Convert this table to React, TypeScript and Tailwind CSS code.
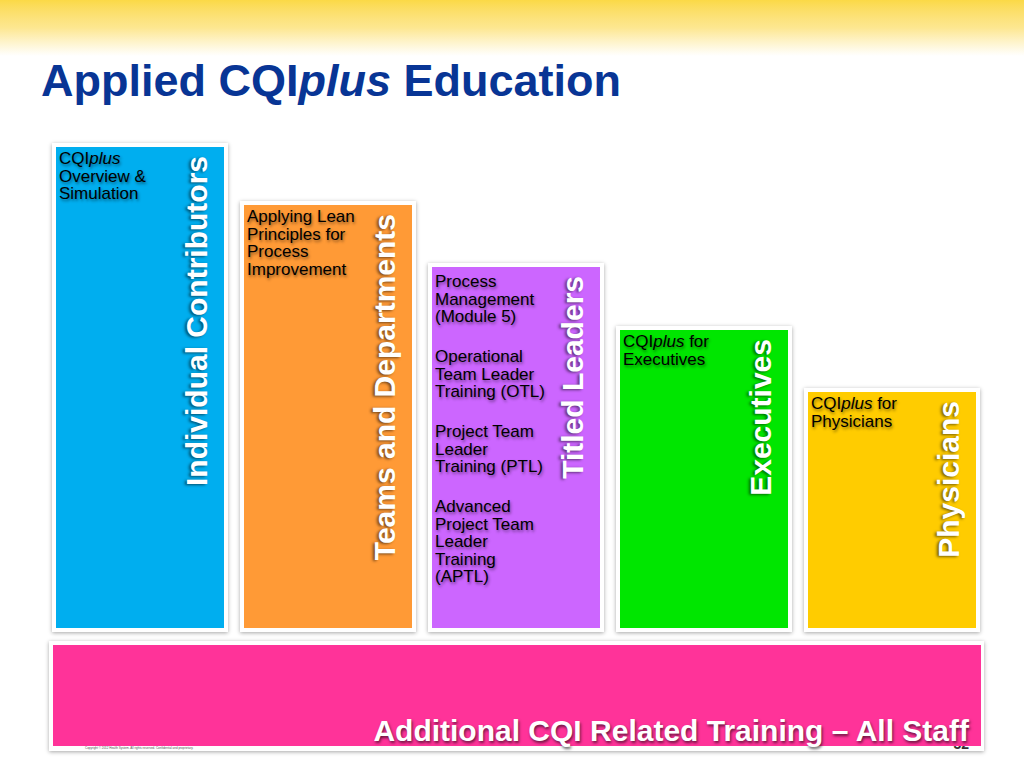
import type { ReactNode } from "react";

type ColumnProps = {
  color: string;
  height: string;
  label: string;
  textTop?: string;
  children: ReactNode;
};

const Column = ({ color, height, label, textTop = "pt-[3px]", children }: ColumnProps) => (
  <div className="w-[176px] bg-white p-[4px] shadow-[0_1px_4px_rgba(0,0,0,0.35)]">
    <div className={`${color} ${height} flex`}>
      <div
        className={`flex-1 min-w-0 pl-[3px] ${textTop} text-[17px] leading-[17.5px] text-black [text-shadow:1px_2px_3px_rgba(0,0,0,0.45)]`}
      >
        {children}
      </div>
      <div className="pt-[9px] pr-[12px]">
        <div className="[writing-mode:vertical-rl] rotate-180 whitespace-nowrap text-[30px] leading-none font-bold text-white [text-shadow:-1px_-2px_3px_rgba(0,0,0,0.55)]">
          {label}
        </div>
      </div>
    </div>
  </div>
);

const App = () => {
  return (
    <div className="w-[1024px] h-[768px] overflow-hidden bg-white font-['Liberation_Sans',Arial,sans-serif]">
      <div className="h-[56px] bg-linear-to-b from-[#fbd946] via-[#fde791] to-white" />

      <div className="h-[86px] pl-[41px] pt-[2px]">
        <h1 className="text-[45px] leading-none font-bold text-[#083595]">
          Applied CQI<i>plus</i> Education
        </h1>
      </div>

      {/* stepped columns */}
      <div className="ml-[52px] h-[490px] flex items-end gap-[12px]">
        <Column color="bg-[#00aeef]" height="h-[481px]" label="Individual Contributors">
          CQI<i>plus</i>
          <br />
          Overview &amp;
          <br />
          Simulation
        </Column>
        <Column color="bg-[#ff9a36]" height="h-[423px]" label="Teams and Departments">
          Applying Lean
          <br />
          Principles for
          <br />
          Process
          <br />
          Improvement
        </Column>
        <Column color="bg-[#cc66ff]" height="h-[361px]" label="Titled Leaders" textTop="pt-[6px]">
          <p>
            Process
            <br />
            Management
            <br />
            (Module 5)
          </p>
          <p className="mt-[22.5px]">
            Operational
            <br />
            Team Leader
            <br />
            Training (OTL)
          </p>
          <p className="mt-[22.5px]">
            Project Team
            <br />
            Leader
            <br />
            Training (PTL)
          </p>
          <p className="mt-[22.5px]">
            Advanced
            <br />
            Project Team
            <br />
            Leader
            <br />
            Training
            <br />
            (APTL)
          </p>
        </Column>
        <Column color="bg-[#00e600]" height="h-[298px]" label="Executives">
          CQI<i>plus</i> for
          <br />
          Executives
        </Column>
        <Column color="bg-[#ffcc00]" height="h-[236px]" label="Physicians">
          CQI<i>plus</i> for
          <br />
          Physicians
        </Column>
      </div>

      {/* all staff bar */}
      <div className="mt-[9px] ml-[49px] w-[935px] bg-white pl-[4px] pr-[3px] pt-[4px] shadow-[0_1px_4px_rgba(0,0,0,0.35)]">
        <div className="h-[101px] bg-[#ff3399] flex flex-col justify-end items-end pr-[12px]">
          <div className="text-[30px] leading-none font-bold text-white whitespace-nowrap [text-shadow:1px_2px_3px_rgba(0,0,0,0.6)]">
            Additional CQI Related Training – All Staff
          </div>
        </div>
        <div className="h-[5px] overflow-hidden flex justify-between items-start">
          <div className="ml-[32px] mt-[1px] text-[3px] leading-none text-[#555]">
            Copyright © 2012 Health System. All rights reserved. Confidential and proprietary.
          </div>
          <div className="mr-[12px] -mt-[9px] text-[14px] leading-none font-bold text-[#333]">32</div>
        </div>
      </div>
    </div>
  );
};

export default App;
